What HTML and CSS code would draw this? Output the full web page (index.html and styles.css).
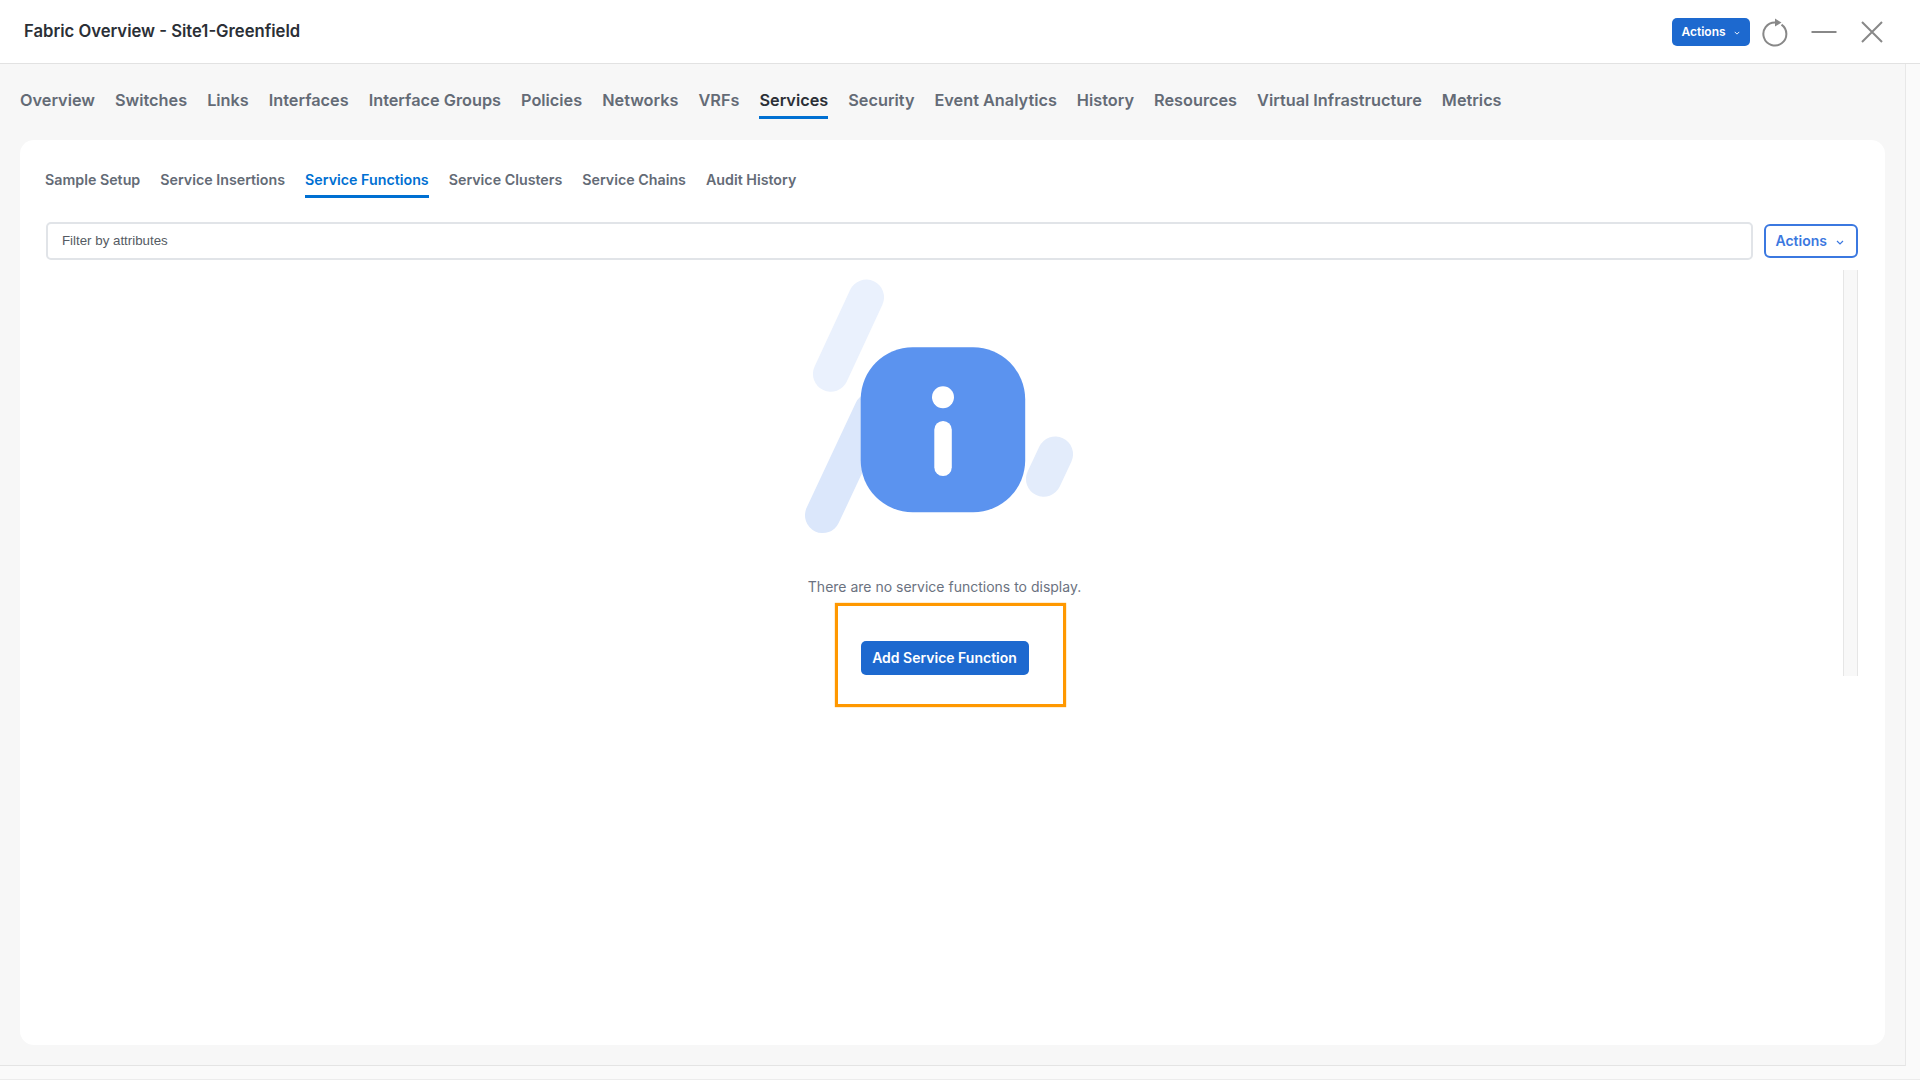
FILE: index.html
```html
<!DOCTYPE html>
<html>
<head>
<meta charset="utf-8">
<title>Fabric Overview</title>
<link rel="stylesheet" href="styles.css">
</head>
<body>
    <div class="window">
        <header class="header">
            <h1 class="title">Fabric Overview - Site1-Greenfield</h1>
            <button class="actions-solid">Actions
                <svg class="chevron" viewBox="0 0 8 5"><path d="M1 1l3 3 3-3"/></svg>
            </button>
            <svg class="icon icon-refresh" viewBox="0 0 30 30"><path d="M21.5 7.6A11.500 11.500 0 1 1 15 5.500"/><polygon points="15,1.500 21.500,5.600 15,9.600"/></svg>
            <svg class="icon icon-minimize" viewBox="0 0 28 28"><path d="M1.500 14h25"/></svg>
            <svg class="icon icon-close" viewBox="0 0 24 24"><path d="M2 2l20 20M22 2L2 22"/></svg>
        </header>
        <main class="main">
            <nav class="tabs">
                <a class="tab">Overview</a>
                <a class="tab">Switches</a>
                <a class="tab">Links</a>
                <a class="tab">Interfaces</a>
                <a class="tab">Interface Groups</a>
                <a class="tab">Policies</a>
                <a class="tab">Networks</a>
                <a class="tab">VRFs</a>
                <a class="tab active">Services</a>
                <a class="tab">Security</a>
                <a class="tab">Event Analytics</a>
                <a class="tab">History</a>
                <a class="tab">Resources</a>
                <a class="tab">Virtual Infrastructure</a>
                <a class="tab">Metrics</a>
            </nav>
            <section class="card">
                <nav class="subtabs">
                    <a class="subtab">Sample Setup</a>
                    <a class="subtab">Service Insertions</a>
                    <a class="subtab active">Service Functions</a>
                    <a class="subtab">Service Clusters</a>
                    <a class="subtab">Service Chains</a>
                    <a class="subtab">Audit History</a>
                </nav>
                <div class="filter-row">
                    <div class="filter">Filter by attributes</div>
                    <button class="actions-outline">Actions
                        <svg class="chevron" viewBox="0 0 8 5"><path d="M1 1l3 3 3-3"/></svg>
                    </button>
                </div>
                <div class="content">
                    <div class="empty">
                        <svg class="empty-art" viewBox="5 10 320 280">
                            <path class="stripe-top" d="M86.300 37.300L50.700 114"/>
                            <path class="stripe-left" d="M92 150L42.700 255.300"/>
                            <path class="stripe-right" d="M275.300 194.300L263.700 219"/>
                            <rect class="art-square" x="80.700" y="87.300" width="164.500" height="165" rx="52"/>
                            <circle class="art-mark" cx="163" cy="137.300" r="11"/>
                            <rect class="art-mark" x="154.300" y="161" width="17.500" height="55" rx="8.700"/>
                        </svg>
                        <p class="empty-text">There are no service functions to display.</p>
                        <button class="add-button">Add Service Function</button>
                        <div class="callout"></div>
                    </div>
                    <div class="scrollbar"></div>
                </div>
            </section>
        </main>
    </div>
</body>
</html>
```
FILE: styles.css
```css
body, html {
    margin: 0;
}

body {
    font-family: Inter, "Liberation Sans", sans-serif;
    background-color: #fafafa;
}

button {
    font-family: inherit;
    cursor: pointer;
}

.window {
    height: 1080px;
    display: flex;
    flex-direction: column;
    border-bottom: 1px solid #ececec;
    box-sizing: border-box;
    overflow: hidden;
}

.header {
    height: 64px;
    box-sizing: border-box;
    flex: none;
    display: flex;
    align-items: center;
    padding: 1px 36px 0 24px;
    background-color: white;
    border-bottom: 1px solid #e2e2e2;
}

.title {
    margin: -2px auto 0 0;
    font-size: 16.650px;
    font-weight: 600;
    color: #2b2f36;
}

.actions-solid {
    width: 78px;
    height: 28px;
    padding: 0 1px 2px 0;
    border: none;
    border-radius: 5px;
    background-color: #1d69cf;
    color: white;
    font-size: 12px;
    font-weight: 600;
}

.actions-solid .chevron {
    width: 6px;
    height: 4px;
    margin-left: 5px;
}

.chevron {
    width: 8px;
    height: 5px;
    vertical-align: 1px;
    fill: none;
    stroke: currentColor;
    stroke-width: 1.200;
}

.icon {
    flex: none;
    fill: none;
    stroke: #888888;
    stroke-width: 2;
}

.icon-refresh {
    width: 30px;
    height: 30px;
    margin-left: 10px;
}

.icon-refresh polygon {
    fill: #888888;
    stroke: none;
}

.icon-minimize {
    width: 28px;
    height: 28px;
    margin-left: 20px;
}

.icon-close {
    width: 24px;
    height: 24px;
    margin-left: 22px;
}

.main {
    width: 1906px;
    height: 1002px;
    box-sizing: border-box;
    flex: none;
    display: flex;
    flex-direction: column;
    background-color: #f7f7f7;
    border-right: 1px solid #e8e8e8;
    border-bottom: 1px solid #e4e4e4;
}

.tabs {
    display: flex;
    gap: 20px;
    padding: 26px 0 0 20px;
    margin-bottom: 21px;
}

.tab {
    padding-bottom: 6px;
    border-bottom: 3px solid transparent;
    font-size: 16.300px;
    line-height: 20px;
    font-weight: 600;
    color: #646b76;
}

.tab.active {
    color: #2b2f36;
    border-bottom-color: #0070d2;
}

.card {
    height: 905px;
    margin: 0 20px;
    padding: 30px 27px 0 26px;
    box-sizing: border-box;
    background-color: white;
    border-radius: 14px;
}

.subtabs {
    display: flex;
    gap: 20px;
    margin-left: -1px;
}

.subtab {
    padding-bottom: 5px;
    border-bottom: 3px solid transparent;
    font-size: 14.250px;
    line-height: 20px;
    font-weight: 600;
    color: #646b76;
}

.subtab.active {
    color: #0070d2;
    border-bottom-color: #0070d2;
}

.filter-row {
    display: flex;
    align-items: center;
    gap: 11px;
    margin-top: 24px;
}

.filter {
    flex: 1;
    height: 38px;
    box-sizing: border-box;
    padding-left: 14px;
    border: 2px solid #e1e4e8;
    border-radius: 5px;
    font-family: "Liberation Sans", Arial, sans-serif;
    font-size: 13.300px;
    line-height: 34px;
    color: #555b63;
}

.actions-outline {
    width: 94px;
    height: 34px;
    padding: 0 3px 2px 0;
    border: 2px solid #3b78e0;
    border-radius: 6px;
    background-color: white;
    color: #3b78e0;
    font-size: 14px;
    font-weight: 600;
}

.actions-outline .chevron {
    margin-left: 5px;
}

.content {
    display: flex;
    height: 406px;
    margin-top: 10px;
}

.empty {
    flex: 1;
    position: relative;
    display: flex;
    flex-direction: column;
    align-items: center;
}

.empty-art {
    display: block;
    width: 320px;
    height: 280px;
    flex: none;
}

.stripe-top, .stripe-left, .stripe-right {
    fill: none;
    stroke-width: 35.500;
    stroke-linecap: round;
}

.stripe-top {
    stroke: #eaf1fd;
}

.stripe-left {
    stroke: #dbe7fb;
}

.stripe-right {
    stroke: #e3ecfb;
}

.art-square {
    fill: #5b93ef;
}

.art-mark {
    fill: white;
}

.empty-text {
    margin: 27px 0 0 0;
    font-size: 14px;
    line-height: 20px;
    color: #6b7280;
}

.add-button {
    width: 168px;
    height: 34px;
    margin-top: 44px;
    padding: 0 0 2px 0;
    border: none;
    border-radius: 5px;
    background-color: #1d69cf;
    color: white;
    font-size: 14px;
    font-weight: 600;
}

.callout {
    position: absolute;
    left: 789px;
    top: 333px;
    width: 231px;
    height: 104px;
    box-sizing: border-box;
    border: 3px solid #ff9800;
    box-shadow: 0 0 1px #ff9800;
}

.scrollbar {
    flex: none;
    width: 15px;
    box-sizing: border-box;
    background-color: #f8f8f8;
    border-left: 1px solid #e6e6e6;
    border-right: 1px solid #e6e6e6;
}
```
